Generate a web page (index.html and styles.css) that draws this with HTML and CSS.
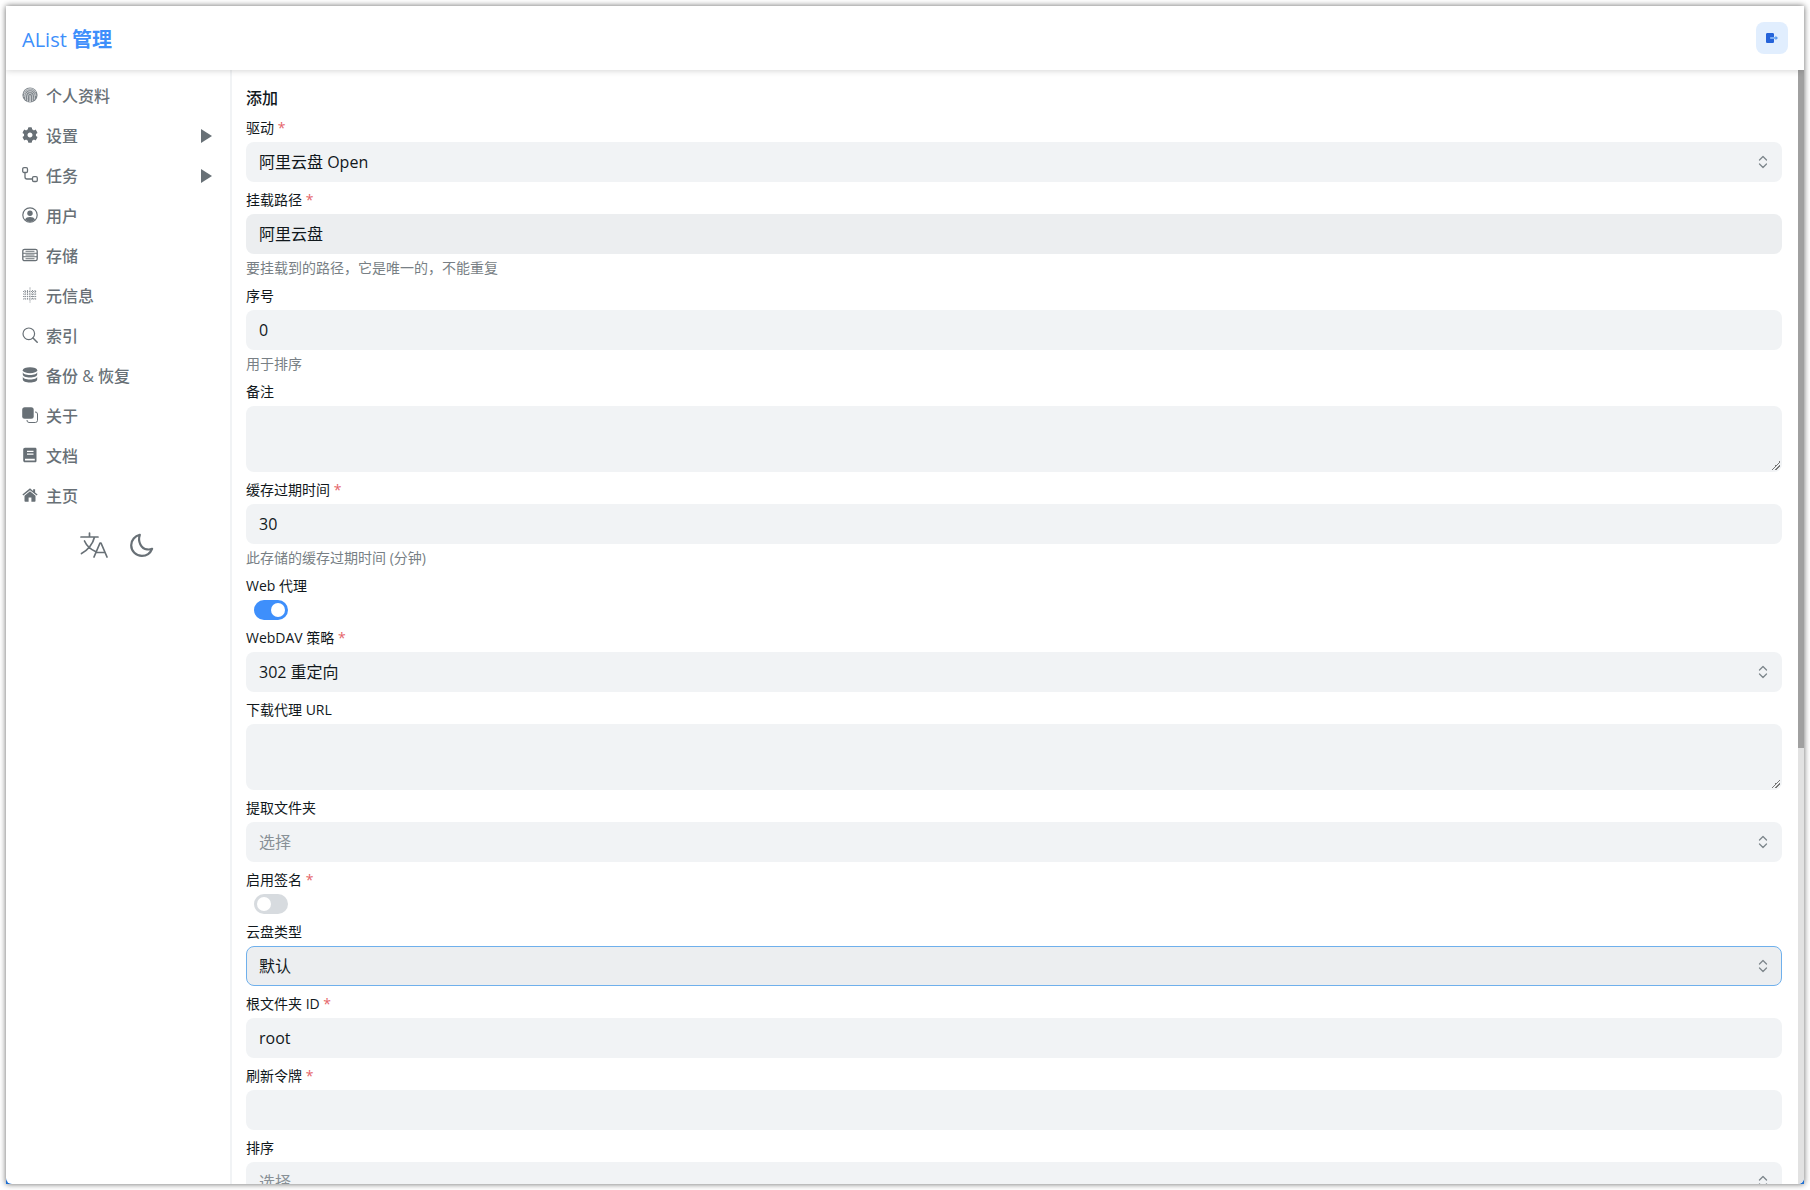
FILE: index.html
```html
<!DOCTYPE html>
<html lang="zh-CN">
<head>
<meta charset="utf-8">
<title>AList 管理</title>
<link rel="stylesheet" href="styles.css">
</head>
<body>
<svg class="defs" width="0" height="0" aria-hidden="true"><symbol id="chev" viewBox="0 0 10 14"><path fill="none" stroke="#7e868c" stroke-width="1.300" stroke-linecap="round" stroke-linejoin="round" d="M1.500 5L5 1.500 8.500 5M1.500 9L5 12.500 8.500 9"/></symbol></svg>
<div class="window">
  <div class="app">
    <header class="topbar">
      <h1 class="brand">AList <span class="brand-cjk">管理</span></h1>
      <button class="logout" type="button" aria-label="退出">
        <svg viewBox="0 0 12 12" width="12" height="12"><path fill="#2563d9" d="M1.300 1h5.400C7.400 1 8 1.600 8 2.300V5H4.500v2H8v2.700C8 10.400 7.400 11 6.700 11H1.300C.6 11 0 10.400 0 9.700V2.300C0 1.600.6 1 1.300 1z"/><path fill="#5b9bf0" d="M4.500 5.300H9.500V3.800L12 6 9.500 8.200V6.700H4.500z"/></svg>
      </button>
    </header>
    <div class="body">
      <nav class="side">
        <a class="item"><svg class="ico" viewBox="0 0 16 16"><circle cx="8" cy="8" r="7.600" fill="#7f868c"/><g fill="none" stroke="#e6e8ea" stroke-width=".7"><path d="M1.800 6.500A6.500 6.500 0 0 1 13.800 5"/><path d="M2 10c.4-4.500 2.800-7.200 6-7.200s5.500 2.500 5.900 6.200"/><path d="M3.600 12.800C3 8 4.500 4.600 8 4.600s5 3 4.400 8"/><path d="M5.600 14.600C5.200 10 5.500 6.300 8 6.300s3 3.500 2.500 8"/><path d="M7.600 15c.5-3 0-6.700.4-6.700s.8 3.700.4 6.700"/></g></svg><span>个人资料</span></a>
        <a class="item"><svg class="ico" viewBox="0 0 512 512"><path fill="#687076" d="M487.400 315.700l-42.600-24.600c4.300-23.200 4.300-47 0-70.200l42.600-24.600c4.900-2.800 7.100-8.600 5.500-14-11.100-35.600-30-67.800-54.700-94.600-3.800-4.100-10-5.100-14.800-2.300L380.800 110c-17.900-15.400-38.500-27.300-60.800-35.100V25.800c0-5.600-3.900-10.500-9.400-11.700-36.700-8.200-74.300-7.800-109.200 0-5.500 1.200-9.400 6.100-9.400 11.700V75c-22.200 7.900-42.800 19.800-60.800 35.100L88.700 85.500c-4.900-2.800-11-1.900-14.800 2.300-24.700 26.700-43.600 58.900-54.700 94.600-1.700 5.400.6 11.200 5.500 14L67.300 221c-4.300 23.200-4.300 47 0 70.200l-42.600 24.600c-4.900 2.800-7.100 8.600-5.500 14 11.100 35.600 30 67.800 54.700 94.600 3.800 4.100 10 5.100 14.800 2.300l42.600-24.600c17.900 15.400 38.500 27.300 60.800 35.100v49.200c0 5.600 3.900 10.500 9.400 11.700 36.700 8.200 74.300 7.800 109.200 0 5.500-1.200 9.400-6.100 9.400-11.700v-49.200c22.200-7.900 42.800-19.800 60.800-35.100l42.600 24.600c4.900 2.800 11 1.900 14.800-2.300 24.700-26.700 43.600-58.900 54.700-94.600 1.500-5.500-.7-11.300-5.600-14.100zM256 336c-44.100 0-80-35.900-80-80s35.900-80 80-80 80 35.900 80 80-35.900 80-80 80z"/></svg><span>设置</span><i class="arrow"></i></a>
        <a class="item"><svg class="ico" viewBox="0 0 16 16"><g fill="none" stroke="#687076" stroke-width="1.300"><rect x=".7" y=".7" width="4.800" height="4.800" rx="1.300"/><rect x="10.500" y="9.700" width="4.800" height="4.800" rx="1.300"/><path d="M3 5.500V10a2 2 0 0 0 2 2h5.500"/></g></svg><span>任务</span><i class="arrow"></i></a>
        <a class="item"><svg class="ico" viewBox="0 0 16 16"><circle cx="8" cy="8" r="7.200" fill="none" stroke="#687076" stroke-width="1.200"/><circle cx="8" cy="6.300" r="2.700" fill="#687076"/><path fill="#687076" d="M3 12.600C3.800 10.700 5.600 10 8 10s4.200.7 5 2.600A7 7 0 0 1 8 15a7 7 0 0 1-5-2.400z"/></svg><span>用户</span></a>
        <a class="item"><svg class="ico" viewBox="0 0 16 16"><rect x=".8" y="2.300" width="14.400" height="11.400" rx="1.800" fill="none" stroke="#687076" stroke-width="1.300"/><path stroke="#687076" stroke-width="1.100" d="M1 6.200h14M1 9.800h14M3.500 4.300h9M3.500 8h9M3.500 11.700h9" fill="none"/></svg><span>存储</span></a>
        <a class="item"><svg class="ico" viewBox="0 0 16 16"><g fill="none" stroke="#8d9399" stroke-width="1" stroke-dasharray="1.200 .8"><path d="M1 4.500h14M1 7h14M1 9.500h14M1 12h14"/><path d="M3 3v10M5.500 3v10M8 .5v15M10.500 3v10M13 3v10"/></g></svg><span>元信息</span></a>
        <a class="item"><svg class="ico" viewBox="0 0 16 16"><g fill="none" stroke="#687076"><circle cx="6.800" cy="6.800" r="5.800" stroke-width="1.200"/><path stroke-width="1.500" stroke-linecap="round" d="M11 11l4.200 4.200"/></g></svg><span>索引</span></a>
        <a class="item"><svg class="ico" viewBox="0 0 16 16"><g fill="#687076"><ellipse cx="8" cy="3.200" rx="7.200" ry="3"/><path d="M.8 5v2.500C.8 9.200 4 10.500 8 10.500s7.200-1.300 7.200-3V5C15.200 6.700 12 8 8 8S.8 6.700.8 5z"/><path d="M.8 9.500v3C.8 14.200 4 15.500 8 15.500s7.200-1.300 7.200-3v-3c0 1.700-3.200 3-7.200 3S.8 11.200.8 9.500z"/></g></svg><span>备份 &amp; 恢复</span></a>
        <a class="item"><svg class="ico" viewBox="0 0 16 16"><rect x=".2" y=".3" width="11.500" height="11.500" rx="2.500" fill="#687076"/><path fill="none" stroke="#687076" stroke-width="1" d="M13 5a2.200 2.200 0 0 1 2.500 2v6.300a2.200 2.200 0 0 1-2.200 2.200H7a2.200 2.200 0 0 1-2-2.500"/></svg><span>关于</span></a>
        <a class="item"><svg class="ico" viewBox="0 0 16 16"><path fill="#687076" fill-rule="evenodd" d="M3 .8h10.200c.7 0 1.300.6 1.300 1.300v11.800c0 .7-.6 1.300-1.300 1.300H3c-1 0-1.800-.8-1.800-1.800V2.600C1.200 1.600 2 .8 3 .8zM5 3.800v1.200h6.500V3.800zM5 6.500v1.200h6.500V6.500zM3 11.800v1.400c0 .2.200.3.400.3h9.400v-1.700z"/></svg><span>文档</span></a>
        <a class="item"><svg class="ico" viewBox="0 0 16 16"><g fill="#687076"><path d="M8 4.200l-5.500 4.600V14c0 .4.300.8.800.8h3.300V10.500h2.800v4.300h3.300c.5 0 .8-.4.800-.8V8.800z"/><path d="M8 1.200L.4 7.600l.9 1L8 3.200l6.700 5.400.9-1-2.500-2V2.200h-2v1.700z"/></g></svg><span>主页</span></a>
        <div class="tools">
          <svg class="tool-lang" viewBox="0 0 28 26"><g fill="none" stroke="#687076" stroke-width="1.700" stroke-linecap="round" stroke-linejoin="round"><path d="M1 5h17M9.500 1v4M14.500 5C13 12 7.500 18.500 1.500 21.500M4.500 9c2 4.500 6.500 8.500 11 10.500"/><path d="M14 25l6-14h1l6 14M16 20.500h9"/></g></svg>
          <svg class="tool-moon" viewBox="0 0 24 24"><path fill="none" stroke="#687076" stroke-width="2.200" stroke-linecap="round" stroke-linejoin="round" d="M9.800 1.800C5 3 1.200 7.200 1.200 12.200c0 5.900 4.800 10.600 10.700 10.600 4.500 0 8.500-2.800 10.200-7-1.600.6-3.300.8-5 .6C11.200 15.800 7.500 8.500 9.800 1.800z"/></svg>
        </div>
      </nav>
      <main class="main">
        <h2 class="heading">添加</h2>

        <div class="field"><label class="label">驱动 <em>*</em></label><div class="control">阿里云盘 Open<svg class="chev"><use href="#chev"/></svg></div></div>
        <div class="field"><label class="label">挂载路径 <em>*</em></label><div class="control hov">阿里云盘</div><p class="help">要挂载到的路径，它是唯一的，不能重复</p></div>
        <div class="field"><label class="label">序号</label><div class="control">0</div><p class="help">用于排序</p></div>
        <div class="field"><label class="label">备注</label><div class="control area"></div></div>
        <div class="field"><label class="label">缓存过期时间 <em>*</em></label><div class="control">30</div><p class="help">此存储的缓存过期时间 (分钟)</p></div>
        <div class="field"><label class="label"><b>Web</b> 代理</label><span class="switch on"></span></div>
        <div class="field"><label class="label"><b>WebDAV</b> 策略 <em>*</em></label><div class="control">302 重定向<svg class="chev"><use href="#chev"/></svg></div></div>
        <div class="field"><label class="label">下载代理 <b>URL</b></label><div class="control area"></div></div>
        <div class="field"><label class="label">提取文件夹</label><div class="control ph">选择<svg class="chev"><use href="#chev"/></svg></div></div>
        <div class="field"><label class="label">启用签名 <em>*</em></label><span class="switch"></span></div>
        <div class="field"><label class="label">云盘类型</label><div class="control focus">默认<svg class="chev"><use href="#chev"/></svg></div></div>
        <div class="field"><label class="label">根文件夹 <b>ID</b> <em>*</em></label><div class="control">root</div></div>
        <div class="field"><label class="label">刷新令牌 <em>*</em></label><div class="control"></div></div>
        <div class="field"><label class="label">排序</label><div class="control ph">选择<svg class="chev"><use href="#chev"/></svg></div></div>
      </main>
      <div class="scrollbar"><div class="thumb"></div></div>
    </div>
  </div>
</div>
</body>
</html>
```
FILE: styles.css
```css
* { box-sizing: border-box; }
html, body { height: 100%; margin: 0; }
body {
  background: #fff;
  padding: 6px;
  overflow: hidden;
  font-family: "Open Sans", "Noto Sans CJK SC", sans-serif;
  color: #11181c;
}
.defs { position: absolute; }
.window {
  height: 100%;
  background: #1f6fd1;
  box-shadow: 0 0 6px rgba(0, 0, 0, .6);
}
.app {
  height: 100%;
  background: #fff;
  border-radius: 0 0 6px 6px;
  overflow: hidden;
  display: flex;
  flex-direction: column;
}
.topbar {
  height: 64px;
  flex: none;
  display: flex;
  align-items: center;
  justify-content: space-between;
  padding: 0 16px;
  background: #fff;
  box-shadow: 0 1px 6px rgba(0, 0, 0, .16);
  position: relative;
  z-index: 1;
}
.brand {
  margin: 0;
  font-size: 20px;
  font-weight: 500;
  color: #3e8ffb;
}
.brand-cjk { font-weight: 700; }
.logout {
  width: 32px;
  height: 32px;
  border: 0;
  border-radius: 8px;
  background: #e1eefe;
  padding: 0;
  display: flex;
  align-items: center;
  justify-content: center;
}
.body {
  flex: 1;
  min-height: 0;
  display: flex;
}
.side {
  width: 226px;
  flex: none;
  border-right: 2px solid #f1f3f5;
  padding: 5px 16px 0;
}
.item {
  height: 40px;
  display: flex;
  align-items: center;
  gap: 8px;
  font-size: 16px;
  font-weight: 500;
  color: #687076;
}
.ico { width: 16px; height: 16px; flex: none; }
.item span { flex: 1; }
.arrow {
  width: 0;
  height: 0;
  margin: 2px 2px 0 0;
  border-left: 11px solid #687076;
  border-top: 7px solid transparent;
  border-bottom: 7px solid transparent;
}
.tools {
  display: flex;
  justify-content: center;
  align-items: center;
  gap: 22px;
  padding: 17px 3px 0 0;
}
.tool-lang { width: 28px; height: 26px; }
.tool-moon { width: 24px; height: 24px; }
.main {
  flex: 1;
  min-width: 0;
  overflow: hidden;
  padding: 16px 16px 0 14px;
  display: flex;
  flex-direction: column;
  gap: 6px;
}
.scrollbar {
  width: 6px;
  flex: none;
  background: #e2e2e2;
}
.thumb {
  height: 678px;
  background: #a0a0a0;
}
.heading {
  margin: 0;
  font-size: 16px;
  font-weight: 500;
  line-height: 24px;
}
.field { flex: none; display: flex; flex-direction: column; align-items: flex-start; }
.label {
  font-size: 14px;
  font-weight: 400;
  line-height: 21px;
  padding-top: 1px;
  margin-bottom: 4px;
}
.label b { font-weight: 500; }
.label em { font-style: normal; color: #e5646a; }
.control {
  width: 100%;
  height: 40px;
  border-radius: 8px;
  background: #f1f3f5;
  padding: 0 13px;
  font-size: 16px;
  line-height: 40px;
  position: relative;
}
.hov { background: #eceef0; }
.area { height: 66px; }
.area::after {
  content: "";
  position: absolute;
  right: 2px;
  bottom: 2px;
  width: 9px;
  height: 9px;
  background: linear-gradient(135deg, transparent 50%, #777 50%, #777 58%, transparent 58%, transparent 72%, #777 72%, #777 80%, transparent 80%);
}
.chev {
  position: absolute;
  right: 14px;
  top: 13px;
  width: 10px;
  height: 14px;
}
.focus .chev { right: 13px; top: 12px; }
.ph { color: #889096; }
.focus {
  background: #eceef0;
  border: 1px solid #6fb0ec;
  line-height: 38px;
  padding: 0 12px;
}
.help {
  margin: 3px 0 0;
  font-size: 14px;
  line-height: 21px;
  color: #787f85;
}
.switch {
  width: 34px;
  height: 20px;
  margin-left: 8px;
  border-radius: 10px;
  background: #d7dbdf;
  padding: 3px;
  display: flex;
}
.switch::before {
  content: "";
  width: 14px;
  height: 14px;
  border-radius: 50%;
  background: #fff;
}
.switch.on { background: #3e8ffb; justify-content: flex-end; }
```
